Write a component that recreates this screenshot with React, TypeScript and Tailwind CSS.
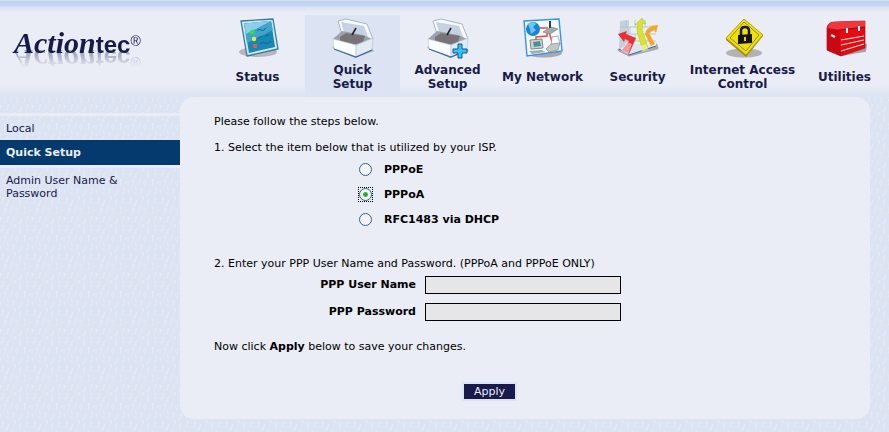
import { useState } from 'react'
import type { ReactNode } from 'react'

const Box = () => (
    <>
        <path d="M1 31 L24 41 L43 34 L40 30 L4 27Z" fill="#b3b1b1" />
        <path d="M7 4 L15 2 L36 7 L42 22 L38 25 L11 17Z" fill="#f7f9fc" stroke="#a5b5ca" />
        <path d="M10 5 L33 9 L38 22 L13 15Z" fill="#c3d2e4" />
        <path d="M2 22 L11 14 L32 18 L41 22 L25 29Z" fill="#9aa2ac" />
        <path d="M9 20 L15 16 L34 19 L32 25 L22 28 L9 24Z" fill="#7a7375" />
        <path d="M2 22 L25 28 L25 40 L3 32Z" fill="#fbfcfe" stroke="#bccadb" strokeWidth="0.6" />
        <path d="M25 28 L42 21 L41 33 L25 40Z" fill="#e3eaf3" stroke="#b2c3d8" strokeWidth="0.6" />
        <path d="M3 32 L25 40 L41 33" fill="none" stroke="#346ca5" strokeWidth="1.2" />
        <path d="M21 18 L25 11" stroke="#272232" strokeWidth="1.6" />
    </>
)

const StatusIcon = () => (
    <>
        <ellipse cx="22" cy="35" rx="19" ry="5" fill="#b8b7b8" />
        <path d="M5 4 L37 2 L42 32 L11 39Z" fill="#d3e6f0" stroke="#3579aa" strokeWidth="1.3" strokeLinejoin="round" />
        <path d="M8 6.5 L35 4 L39 30 L13 36Z" fill="#1688b5" />
        <path d="M8 6.5 L35 4 L37 13 L11 26Z" fill="#3fa5cb" />
        <path d="M8 6.5 L35 4 L10 17Z" fill="#8bd0e8" />
        <circle cx="16" cy="15" r="2.2" fill="#28e748" />
        <circle cx="18" cy="22" r="2.2" fill="#f4e829" />
        <circle cx="19" cy="29" r="2.2" fill="#ee5a36" />
        <path d="M21 14 q2 -3 4 -1 t5 -2 M22 21 q2 -2 4 -1 m3 -1 l4 -1 M24 27 q3 -3 5 -1 t6 -2" fill="none" stroke="#285d87" />
    </>
)

const AdvancedIcon = () => (
    <>
        <Box />
        <path d="M32 27h4v5h5v4h-5v5h-4v-5h-5v-4h5z" fill="#35c3f5" stroke="#0d568f" />
    </>
)

const NetworkIcon = () => (
    <>
        <ellipse cx="23" cy="36" rx="18" ry="4.5" fill="#aaa8aa" />
        <path d="M3 4 L38 2 L41 34 L6 39Z" fill="#f5faff" stroke="#3295f5" strokeWidth="1.4" />
        <path d="M17 11h10M26 14v5l-11 1v4M28 15l3 10" fill="none" stroke="#e84e3c" strokeWidth="1.5" />
        <circle cx="12" cy="12" r="7" fill="#1687d6" />
        <path d="M7 7q5-4 8 0l-3 3 3 3-5 4-1-5z" fill="#72c4ee" />
        <path d="M22 15l8-5 7 2-8 5z" fill="#a3aaad" stroke="#737d81" strokeWidth="0.6" />
        <path d="M29 4v7" stroke="#28415f" strokeWidth="2" />
        <path d="M9 23l12-1 1 9-12 1z" fill="#d2d4cb" stroke="#7e8788" />
        <path d="M12 25l7-1 1 5-7 1z" fill="#48949c" />
        <path d="M8 34l13-1 3 2-13 2z" fill="#a7acab" />
        <path d="M31 20l6-1 2 8-9 2z" fill="#fff" stroke="#8c8c8c" strokeWidth="0.7" />
        <path d="M25 32l5-5 9-1-2 7-9 2z" fill="#c4c6c1" stroke="#8b8d88" strokeWidth="0.7" />
    </>
)

const SecurityIcon = () => (
    <>
        <path d="M3 33 L13 38 L41 31 L40 28Z" fill="#aaa" stroke="#aaa" strokeWidth="3" strokeLinejoin="round" />
        <path d="M4 4 L13 3 L15 27 L3 32Z" fill="#c5d2dc" />
        <path d="M13 3h27v26L13 37z" fill="#e9f0f4" />
        <path d="M3 32L15 26l25 3-27 9z" fill="#dce6ef" />
        <path d="M4 10h36M4 17h36M4 24h36M10 3v7m9-7v7m10-7v7M14 10v7m10-7v7m10-7v7M10 17v7m9-7v7m13-7v7M15 24v3m12-3v5" fill="none" stroke="#aebdca" strokeWidth="0.8" />
        <path d="M3 32L13 38L40 29" fill="none" stroke="#2d6cb3" />
        <path d="M2 17l9-3-1 3 10 4-7 16-7-4 7-9-4-2-1 3z" fill="#e83135" />
        <path d="M26 1l4 6-3-1q-2 8 1 12l4 13-5 3-5-16q-2-5 0-11l-3 1z" fill="#d8e42b" stroke="#b7ba28" strokeWidth="0.5" />
        <path d="M42 8l-2 8-2-3-5 3 6 11-4 2-6-12q1-6 7-7l-3-1z" fill="#f5a529" />
        <path d="M5 34l6-9 5 2-4 11z" fill="#fff" opacity="0.5" />
        <path d="M26 35l-2-6 6-2 3 6z" fill="#fff" opacity="0.4" />
    </>
)

const LockIcon = () => (
    <>
        <ellipse cx="23" cy="36" rx="18" ry="4.5" fill="#b3b2b3" />
        <path d="M5 21v2l20 17 17-21v-2z" fill="#9a8910" />
        <path d="M23 2 L42 18 L25 38 L5 21Z" fill="#eee010" stroke="#b4a40b" strokeLinejoin="round" />
        <path d="M23 5 L38 18 L25 34 L9 21Z" fill="none" stroke="#817b12" strokeWidth="0.8" />
        <path d="M17 18l14-1v9l-14 1z" fill="#151408" />
        <path d="M20 18v-4q0-4 4-4t4 4v4" fill="none" stroke="#151408" strokeWidth="2.5" />
        <path d="M24 20v4" stroke="#e0d111" strokeWidth="2" />
    </>
)

const ToolboxIcon = () => (
    <>
        <path d="M5 33l13 5 24-4 1-6z" fill="#a5a1a3" stroke="#a5a1a3" strokeWidth="2" />
        <path d="M4 11q1-6 7-6l31-1v27l-24 8-14-6z" fill="#e40b12" stroke="#ad1019" strokeWidth="0.7" />
        <path d="M4 11l12 2 2 26L4 33z" fill="#c90811" />
        <path d="M5 10q1-5 6-5l31-1v6l-24 3-13-2z" fill="#f0383c" />
        <path d="M16 13l26-3" stroke="#9c0911" />
        <path d="M18 23l23-4M18 28l23-5M18 34l23-7" stroke="#f7dede" strokeWidth="1.1" />
        <path d="M24 11v5M36 9v5" stroke="#fff" strokeWidth="2" />
        <path d="M8 18l4 2" stroke="#f0dfdf" strokeWidth="2.5" />
    </>
)

const tabs: { label: string; icon: ReactNode }[] = [
    { label: 'Status', icon: <StatusIcon /> },
    { label: 'Quick\nSetup', icon: <Box /> },
    { label: 'Advanced\nSetup', icon: <AdvancedIcon /> },
    { label: 'My Network', icon: <NetworkIcon /> },
    { label: 'Security', icon: <SecurityIcon /> },
    { label: 'Internet Access\nControl', icon: <LockIcon /> },
    { label: 'Utilities', icon: <ToolboxIcon /> },
]

const activeTab = tabs[1]

const protocols = ['PPPoE', 'PPPoA', 'RFC1483 via DHCP']

const fields = [
    { id: 'username', label: 'PPP User Name', type: 'text' },
    { id: 'password', label: 'PPP Password', type: 'password' },
]

function Header() {
    return (
        <header className="flex bg-[linear-gradient(to_bottom,#dce3f2_0px,#b9cff0_2px,#c3d5f1_5px,#dce5f4_8px,#eaedf6_13px,#eaedf6_84px,#dce3f2_97px)] pt-[15px]">
            <a href="#" className="w-[210px] shrink-0 pl-[14px] pt-3 text-[#171a4b]">
                <span className="inline-flex items-baseline leading-8 [-webkit-box-reflect:below_-19px_linear-gradient(transparent_25%,rgba(0,0,0,0.4)_75%)]">
                    <span className="font-['Liberation_Serif',serif] text-[30px] font-bold italic">Action</span>
                    <span className="font-['Liberation_Sans',sans-serif] text-[24px] font-bold">tec</span>
                    <span className="self-start font-['Liberation_Sans',sans-serif] text-[14px] leading-7">®</span>
                </span>
            </a>
            <nav className="grid flex-1 grid-cols-[95fr_95fr_95fr_95fr_95fr_115fr_89fr]">
                {tabs.map((tab) => (
                    <a
                        key={tab.label}
                        href="#"
                        className={`flex flex-col items-center gap-1 pb-[6px] pt-[2px] text-center text-[12px] font-bold leading-[14px] text-[#171a4b] ${tab === activeTab ? 'bg-[#dce3f2]' : ''}`}
                    >
                        <svg viewBox="0 0 44 42" className="h-[42px] w-11">
                            {tab.icon}
                        </svg>
                        <span className="flex h-7 items-center whitespace-pre-line">{tab.label}</span>
                    </a>
                ))}
            </nav>
        </header>
    )
}

function Sidebar() {
    return (
        <aside className="w-[180px] shrink-0 pt-4 text-[11px] leading-[13px] text-[#171a4b]">
            <a href="#" className="flex h-[27px] items-center border-t-[3px] border-[#eaedf6] pl-[6px]">
                Local
            </a>
            <a href="#" className="flex h-[25px] items-center bg-[#053a6e] pl-[6px] font-bold text-[#eaedf6]">
                Quick Setup
            </a>
            <a href="#" className="block border-t-[3px] border-[#eaedf6] pl-[6px] pr-10 pt-[6px]">
                Admin User Name &amp; Password
            </a>
        </aside>
    )
}

// short pale strokes scattered over the page background
function Texture() {
    return (
        <svg className="absolute inset-0 h-full w-full" aria-hidden="true">
            <pattern id="strokes" width="32" height="28" patternUnits="userSpaceOnUse">
                <path
                    d="M3 1v4l-1 3M9 4l-2 4v3M15 0v3l-1 2M21 3l-1 3v4M28 1l-1 4v2M5 12v4l-2 3M12 10v3l-2 4M18 12l-1 4v3M25 11v5l-2 3M31 13l-2 4M1 21l-1 5M8 20v4l-2 3M14 21l-1 5M21 22v3l-2 3M28 20v3l-2 4"
                    fill="none"
                    stroke="#e8edf6"
                    strokeWidth="1"
                    strokeDasharray="3 1"
                />
            </pattern>
            <rect width="100%" height="100%" fill="url(#strokes)" />
        </svg>
    )
}

export default function App() {
    const [protocol, setProtocol] = useState('PPPoA')

    return (
        <div className="relative isolate flex min-h-screen flex-col bg-[#dce3f2] font-['DejaVu_Sans',Verdana,sans-serif] text-black">
            <div className="absolute inset-0 -z-10">
                <Texture />
            </div>
            <Header />
            <div className="flex flex-1 items-start pb-[13px]">
                <Sidebar />
                <main className="mr-[19px] flex-1 rounded-[14px] bg-[#eaedf6] pb-5 pl-[34px] pt-[17px] text-[11px] leading-4">
                    <form className="w-[84%]" onSubmit={(e) => e.preventDefault()}>
                        <p>Please follow the steps below.</p>
                        <fieldset>
                            <legend className="pt-[10px]">1. Select the item below that is utilized by your ISP.</legend>
                            <div className="ml-[145px] pt-[1px]">
                                {protocols.map((name) => (
                                    <label key={name} className="flex h-[25px] items-center gap-3 font-bold">
                                        <span className="flex border border-dotted border-transparent has-checked:border-black -m-px">
                                            <input
                                                type="radio"
                                                name="protocol"
                                                checked={protocol === name}
                                                onChange={() => setProtocol(name)}
                                                className="h-[13px] w-[13px] appearance-none rounded-full border border-[#34618e] bg-[#f1f3f6] checked:bg-[radial-gradient(circle,#21a121_0px,#35bd35_2px,#f4f6f4_3px)]"
                                            />
                                        </span>
                                        {name}
                                    </label>
                                ))}
                            </div>
                        </fieldset>
                        <p className="mt-6">2. Enter your PPP User Name and Password. (PPPoA and PPPoE ONLY)</p>
                        <div className="mt-1 flex flex-col gap-[9px]">
                            {fields.map((field) => (
                                <div key={field.id} className="flex items-center gap-[9px]">
                                    <label htmlFor={field.id} className="w-[202px] text-right font-bold">
                                        {field.label}
                                    </label>
                                    <input
                                        id={field.id}
                                        type={field.type}
                                        className="h-[18px] w-[196px] border border-black bg-[#e6e5e8] px-1"
                                    />
                                </div>
                            ))}
                        </div>
                        <p className="mt-[18px]">
                            Now click <b>Apply</b> below to save your changes.
                        </p>
                        <div className="mt-[29px] flex justify-center">
                            <button
                                type="submit"
                                className="h-[15px] bg-[#171a4b] px-[10px] leading-[15px] text-[#eaedf6] outline-2 outline-[#dce3f2]"
                            >
                                Apply
                            </button>
                        </div>
                    </form>
                </main>
            </div>
        </div>
    )
}
